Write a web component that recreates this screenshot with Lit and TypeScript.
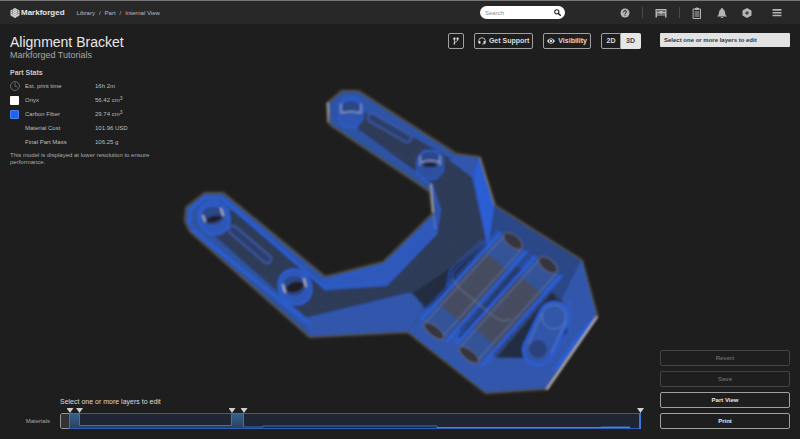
import { LitElement, html, svg, css } from "lit";
import { customElement, property, state } from "lit/decorators.js";
import { classMap } from "lit/directives/class-map.js";

@customElement("part-model")
class PartModel extends LitElement {
  static styles = css`
    :host { display: block; width: 100%; height: 100%; }
    svg { display: block; width: 100%; height: 100%; }
    .halo { fill: #444; stroke: #55524e; stroke-width: 4; stroke-linejoin: round; }
    .body { fill: #2f52a0; }
    .inner { fill: #2c374f; }
    .hatch { fill: url(#hatch); }
    .facet { fill: #3156ab; }
    .facet.bright { fill: #2c5fd4; }
    .facet.dim { fill: #2b4788; }
    .edge { fill: none; stroke: #2a60da; stroke-width: 3; stroke-linejoin: round; stroke-linecap: round; }
    .edge.thin { stroke-width: 1; }
    .shadow { fill: #202737; }
    .brown { fill: #484b59; }
    .end { fill: #2f54a6; }
    .mouth { fill: #34363f; stroke: #666a76; stroke-width: 1; }
    .ridge { fill: none; stroke: #5c7cbd; stroke-width: 1; }
    .groove { fill: none; stroke: #687590; stroke-width: 1; stroke-linecap: round; stroke-linejoin: round; }
    .wide { stroke: #4c629a; stroke-width: 10; stroke-linecap: round; }
    .blueline { stroke: #284b9d; stroke-width: 8; stroke-linecap: round; }
    .core { stroke: #2d3d65; stroke-width: 5; stroke-linecap: round; }
    .ring { fill: #2d56b5; stroke: #2a60d8; stroke-width: 2; stroke-linejoin: round; }
    .bore { fill: #29468a; stroke: #3466d2; stroke-width: 1; }
    .glint { fill: none; stroke: #aeb1b8; stroke-width: 2; stroke-linecap: round; }
    .glint.faint { stroke-width: 1; }
    .hole { fill: #201f20; }
    .shine { fill: none; stroke: #b9b7b0; stroke-width: 2; stroke-linecap: round; }
  `;

  render() {
    const outline = "M186 221L187 208L205 194L223 194L325 278L384 263L434 214L431 191L331 124L328 104L342 92L358 92L456 155L479 158L494 206L581 261L596 315L546 388L486 392L408 331L310 336L191 231Z";
    const inner = "M197 220L232 210L318 282L328 290L387 286L437 234L441 210L433 184L357 129L363 112L415 138L454 161L472 177L487 245L562 299L569 330L537 358L497 358L411 293L350 308L307 318Z";
    const slot = (a: number, b: number) => svg`
      <g transform="translate(${a} ${b})">
        <path class="brown" d="M502 234L523 251L446 340L423 320Z"/>
        <path class="end" d="M501 233L524 250L507 270L485 252Z M438 303L460 322L445 340L422 320Z" opacity=".85"/>
        <path class="hatch" d="M502 234L523 251L446 340L423 320Z"/>
        <path class="edge" d="M500 233L422 319M525 252L447 341"/>
        <path class="edge thin" d="M497 231L419 317M529 251L452 341"/>
        <path class="ridge" d="M504 236L426 322M521 250L443 336"/>
        <ellipse class="mouth" cx="513" cy="241" rx="11" ry="6" transform="rotate(38 513 241)"/>
        <ellipse class="mouth" cx="434" cy="331" rx="12" ry="5" transform="rotate(38 434 331)"/>
      </g>`;
    return html`
      <svg viewBox="0 24 800 415" role="img" aria-label="Alignment Bracket internal view">
        <defs>
          <filter id="halo"><feGaussianBlur stdDeviation="1.6"/></filter>
          <filter id="soft"><feGaussianBlur stdDeviation=".85"/></filter>
          <pattern id="hatch" width="3" height="3" patternUnits="userSpaceOnUse" patternTransform="rotate(-32)">
            <path d="M0 1H3" stroke="#3c5488" stroke-width="1" opacity=".45"/>
          </pattern>
        </defs>
        <path class="halo" filter="url(#halo)" d=${outline}/>
        <g filter="url(#soft)">
          <path class="body" d=${outline}/>
          <path class="inner" d=${inner}/>
          <path class="hatch" d=${inner}/>
          <path class="shadow" opacity=".7" d="M486 244L413 293L425 309L450 288Z M528 256L537 266L466 342L456 338Z M553 292L569 330L537 358L498 357Z"/>

          <path class="facet bright" d="M325 278L384 263L434 214L438 233L387 286L328 290L318 282Z" opacity=".5"/>
          <path class="facet" d="M307 318L410 293L423 306L408 331L310 336Z"/>
          <path class="facet dim" d="M494 206L581 261L562 298L488 245Z"/>
          <path class="facet" d="M581 261L596 315L568 336L562 298Z"/>
          <path class="facet" d="M408 331L423 317L497 359L538 358L568 334L596 315L546 388L486 392Z"/>
          <path class="facet bright" d="M473 176L479 158L494 206L488 247Z"/>
          <path class="facet" d="M449 160L456 155L479 158L472 177Z"/>

          <path class="edge" opacity=".85" d="M192 230L309 323M224 200L326 289M190 210L205 197L222 198M190 210L190 225"/>
          <path class="edge thin" d="M187 221L310 328M227 199L325 281L384 266L434 218M325 287L387 282L436 233L440 209L432 188"/>
          <path class="edge thin" opacity=".7" d="M332 122L357 129L432 185M335 106L344 97L358 96L455 158M331 106L332 122M363 106L415 138"/>
          <path class="edge thin" d="M476 163L489 244M493 207L487 247M307 318L410 293M408 329L486 390M582 262L595 314" opacity=".6"/>
          <path class="edge" d="M593 320L556 369"/>
          <path class="edge thin" d="M588 322L548 376M486 240L453 272L450 286M482 240L450 270L447 287M570 300L570 332L552 357"/>

          ${slot(0, 0)}
          ${slot(35, 24)}
          <path class="groove" d="M453 280L460 289L496 318L504 321L511 319"/>

          <path d="M554 317L538 350" stroke="#2a5fdb" stroke-width="32" stroke-linecap="round"/>
          <path d="M554 317L538 350" stroke="#3156aa" stroke-width="27" stroke-linecap="round"/>
          <circle class="ridge" cx="554" cy="317" r="12"/>
          <path class="ridge" d="M542 314L528 345M566 321L551 353"/>
          <circle class="shadow" cx="538" cy="349" r="9" opacity=".4"/>

          <path class="wide" d="M233 230L267 259"/><path class="blueline" d="M233 230L267 259"/><path class="core" d="M233 230L267 259"/>
          <path class="wide" d="M372 118L407 138"/><path class="blueline" d="M372 118L407 138"/><path class="core" d="M372 118L407 138"/>

          <ellipse class="ring" cx="214" cy="218" rx="15" ry="17" transform="rotate(-30 214 218)"/>
          <ellipse class="bore" cx="213" cy="216" rx="12" ry="10"/>
          <ellipse class="hole" cx="214" cy="219" rx="8" ry="3" transform="rotate(-14 214 219)"/>
          <path class="glint" d="M203 216L205 221M221 209L223 215"/>

          <ellipse class="ring" cx="295" cy="287" rx="16" ry="18" transform="rotate(-30 295 287)"/>
          <ellipse class="bore" cx="294" cy="286" rx="12" ry="11"/>
          <ellipse class="hole" cx="295" cy="287" rx="9" ry="5" transform="rotate(-18 295 287)"/>
          <path class="glint" d="M283 285L285 292M304 279L306 286"/>

          <path class="ring" d="M339 106L345 98L356 98L363 106V119L356 127H346L339 120Z" opacity=".75"/>
          <ellipse class="bore" cx="351" cy="107" rx="10" ry="7"/>
          <path class="glint faint" d="M341 104V113M361 104V113M342 113Q351 110 360 113"/>
          <path class="ring" d="M417 160L423 151H436L443 157V171L436 179H425L417 173Z" opacity=".75"/>
          <ellipse class="bore" cx="430" cy="158" rx="10" ry="7"/>
          <path class="glint faint" d="M420 156V165M440 156V165M421 162Q430 159 440 162"/>
          <ellipse class="hole" cx="430" cy="165" rx="7" ry="2"/>

          <path class="shine" d="M431 185L433 212" opacity=".7"/>
          <path class="shine" d="M434 216L435 228" opacity=".25"/>
          <path class="shine" d="M328 103V122" opacity=".6"/>
          <path class="shine" d="M597 317L547 389"/>
          <path class="shine" d="M480 158L494 204" opacity=".2"/>
        </g>
      </svg>`;
  }
}

type IconName = "help" | "printer" | "clipboard" | "bell" | "hex" | "menu" | "branch" | "headset" | "eye" | "search" | "clock" | "logo";

@customElement("ui-icon")
class UiIcon extends LitElement {
  @property() name: IconName = "help";
  static styles = css`
    :host { display: block; flex: none; width: 10px; height: 10px; }
    svg { display: block; width: 100%; height: 100%; fill: currentColor; }
    .line { fill: none; stroke: currentColor; stroke-width: 2; stroke-linecap: round; stroke-linejoin: round; }
    .cut { fill: none; stroke: #282828; stroke-width: 2; stroke-linecap: round; }
    .hollow { fill: #282828; }
    .fine { stroke-width: 1; }
  `;
  private shapes = {
    help: svg`<circle cx="10" cy="10" r="9"/><path class="cut" d="M7 8Q7 5 10 5T13 8Q13 9 10 11V12"/><circle class="hollow" cx="10" cy="15" r="1"/>`,
    printer: svg`<path d="M1 2H23V19H20V15H4V19H1Z"/><path class="hollow" d="M3 5H21V7H3ZM4 11H20V13H4Z"/><path d="M9 6H15V10L12 13L9 10Z"/>`,
    clipboard: svg`<path class="line" d="M2 4H16V23H2Z"/><path d="M5 2H7Q9 -1 11 2H13V6H5Z"/><path class="line" d="M5 10H13M5 14H13M5 18H13"/>`,
    bell: svg`<path d="M10 0Q12 0 12 2Q16 4 16 9Q16 14 20 17H0Q4 14 4 9Q4 4 8 2Q8 0 10 0ZM7 18H13Q12 20 10 20T7 18Z"/>`,
    hex: svg`<path d="M10 0L19 5V15L10 20L1 15V5Z"/><path class="cut" d="M10 7V13M7 10H13"/>`,
    menu: svg`<path d="M1 2H17V5H1ZM1 7H17V10H1ZM1 12H17V15H1Z"/>`,
    branch: svg`<path class="line" d="M6 17V5M6 14L14 9V5"/><circle cx="6" cy="4" r="3"/><circle cx="14" cy="4" r="3"/><circle cx="6" cy="17" r="2"/>`,
    headset: svg`<path class="line" d="M2 13V9Q2 2 10 2T18 9V13Q18 18 12 18"/><path d="M2 10H6V17H4Q1 17 1 14ZM18 10H14V17H16Q19 17 19 14Z"/>`,
    eye: svg`<path d="M0 10Q4 3 10 3T20 10Q16 17 10 17T0 10Z"/><circle cx="10" cy="10" r="5" fill="#1e1e1e"/><circle cx="10" cy="10" r="3"/>`,
    search: svg`<circle cx="8" cy="8" r="6" fill="none" stroke="currentColor" stroke-width="3"/><path d="M12 12L18 18" stroke="currentColor" stroke-width="4" stroke-linecap="round"/>`,
    clock: svg`<circle class="line" cx="10" cy="10" r="9"/><path class="line" d="M10 4V10L14 12"/>`,
    logo: svg`<path d="M10 0L19 5V15L10 20L1 15V5Z"/><path class="cut fine" opacity=".7" d="M1 8L10 3L19 8M1 12L10 7L19 12M2 15L10 11L18 15M6 17L10 15L14 17M5 3V12M15 3V12"/>`,
  };
  render() {
    const box: Partial<Record<IconName, string>> = { printer: "0 0 24 20", clipboard: "0 0 18 24", menu: "0 0 18 18" };
    return html`<svg viewBox=${box[this.name] ?? "0 0 20 20"} aria-hidden="true">${this.shapes[this.name]}</svg>`;
  }
}

@customElement("layer-track")
class LayerTrack extends LitElement {
  static styles = css`
    :host { display: block; position: relative; height: 16px; }
    svg { display: block; width: 100%; height: 16px; }
    .markers { position: absolute; left: 0; right: 0; top: -5px; height: 5px; }
    .marker {
      position: absolute; width: 7px; height: 5px; margin-left: -3px;
      background: #cfcfcf; clip-path: polygon(0 0, 100% 0, 50% 100%);
    }
  `;
  render() {
    return html`
      <svg viewBox="0 0 581 16" preserveAspectRatio="none" role="img" aria-label="Materials by layer">
        <defs><linearGradient id="fill" x2="0" y2="1"><stop stop-color="#32628c"/><stop offset="1" stop-color="#2c405f"/></linearGradient></defs>
        <rect x="9" y="0" width="572" height="16" fill="#1f2533"/>
        <rect x="10" y="1" width="10" height="14" fill="url(#fill)"/>
        <rect x="172" y="1" width="12" height="14" fill="url(#fill)"/>
        <rect x="20" y="12" width="152" height="3" fill="#264262"/>
        <rect x="9.500" y=".5" width="571" height="15" fill="none" stroke="#2d5db8"/>
        <path d="M9.5 15V.5H19.500V12.500H171.500V.5H183.500V14H203V13H377V14.500H541V14H570" fill="none" stroke="#3474b8"/>
        <path d="M377 14.500H570" stroke="#3f8bd0"/>
        <path d="M580 0V16" stroke="#3b74dc" stroke-width="2"/>
        <path d="M9 .5H1.500L.5 1.500V14.500L1.500 15.500H9" fill="#333" stroke="#929292"/>
      </svg>
      <div class="markers">
        ${[9.5, 19, 171.5, 183.5, 580].map((x) => html`<span class="marker" style="left:${(x / 581) * 100}%"></span>`)}
      </div>`;
  }
}

@customElement("app-root")
class AppRoot extends LitElement {
  @state() private mode = "3D";

  static styles = css`
    :host {
      display: flex; flex-direction: column; min-height: 100vh; box-sizing: border-box;
      background: #1e1e1e; color: #bdbdbd; border-top: 1px solid #777;
      font: 6px/8px "Liberation Sans", Arial, sans-serif;
    }
    * { box-sizing: border-box; }
    button, input { font: inherit; color: inherit; margin: 0; }
    h1, h2, p { margin: 0; font-weight: normal; }
    header { display: grid; grid-template-columns: 1fr auto 1fr; align-items: center; height: 23px; padding: 0 18px 0 10px; background: #282828; }
    .start, .crumbs { display: flex; align-items: center; }
    .brand { display: flex; align-items: center; gap: 1px; color: #e6e6e6; font-size: 8px; font-weight: bold; text-decoration: none; }
    .crumbs { gap: 4px; margin-left: 12px; }
    .crumbs a { color: inherit; text-decoration: none; }
    .search { display: flex; align-items: center; width: 85px; height: 13px; padding: 0 4px 0 5px; border-radius: 7px; background: #fff; color: #222; margin-left: 253px; }
    .search input { flex: 1; min-width: 0; padding: 0; border: 0; outline: 0; background: none; }
    .search input::placeholder { color: #8d8d8d; opacity: 1; }
    .search ui-icon { width: 7px; height: 7px; }
    .tools { display: flex; align-items: center; justify-content: flex-end; gap: 12px; color: #b5b5b5; }
    .tools button { display: block; padding: 0; border: 0; background: none; }
    .rule { width: 1px; height: 11px; background: #4a4a4a; }
    .printer { width: 12px; }
    .clipboard { height: 12px; }
    .tools .apart { margin-left: 3px; }
    .tools .menu { margin-left: 8px; }
    main { position: relative; flex: 1; display: grid; grid-template-columns: minmax(0, 1fr) 130px; column-gap: 19px; padding: 9px 10px 10px; }
    .canvas { position: absolute; inset: 0; }
    .work, aside { position: relative; display: flex; flex-direction: column; justify-content: space-between; }
    .work { pointer-events: none; }
    .work button { pointer-events: auto; }
    .top { display: flex; justify-content: space-between; align-items: flex-start; }
    h1 { font-size: 14px; line-height: 18px; color: #e8e8e8; }
    .owner { font-size: 9px; line-height: 9px; color: #a6a6a6; }
    h2 { font-size: 7px; line-height: 8px; margin-top: 9px; color: #c8c8c8; font-weight: bold; }
    .stats { border-collapse: collapse; margin-top: 2px; }
    .stats td, .stats th { height: 14px; padding: 0; font-weight: normal; text-align: left; }
    .stats .key { width: 15px; }
    .stats th { width: 70px; }
    .stats sup { font-size: 5px; line-height: 0; vertical-align: 2px; }
    .stats ui-icon { color: #666; }
    .swatch { display: block; width: 9px; height: 9px; border-radius: 1px; background: #fff; }
    .swatch.fiber { background: #1f62f2; border: 1px solid #4b80f0; }
    .note { width: 146px; margin-top: 3px; line-height: 7px; color: #aaa; }
    .actions { display: flex; gap: 10px; font-size: 7px; font-weight: bold; color: #ddd; }
    .actions button { display: flex; align-items: center; justify-content: center; gap: 3px; height: 16px; padding: 0 3px; border: 1px solid #a0a0a0; border-radius: 2px; background: #1e1e1e; white-space: nowrap; }
    .actions ui-icon { width: 8px; height: 8px; }
    .segment { display: flex; }
    .actions .segment button { width: 20px; padding: 0; border-radius: 2px 0 0 2px; }
    .actions .segment button + button { border-radius: 0 2px 2px 0; border-left: 0; }
    .actions .segment .on { background: #e6e6e6; color: #444; border-color: #e6e6e6; }
    .hint { height: 14px; padding: 0 4px; border-radius: 1px; background: #e2e2e2; color: #333; font-weight: bold; line-height: 14px; }
    .side-buttons { display: grid; gap: 5px; }
    .side-buttons button { height: 16px; padding: 0; border: 1px solid #a0a0a0; border-radius: 2px; background: none; color: #e6e6e6; font-weight: bold; }
    .side-buttons button:disabled { border-color: #444; color: #666; }
    .timeline { display: grid; grid-template-columns: 40px 1fr; column-gap: 10px; align-items: center; }
    .timeline p { grid-column: 2; margin-bottom: 7px; font-size: 7px; color: #dcdcdc; }
    .label { text-align: right; color: #a6a6a6; }
  `;

  private row(key: unknown, name: string, value: unknown) {
    return html`<tr><td class="key">${key}</td><th scope="row">${name}</th><td>${value}</td></tr>`;
  }

  render() {
    return html`
      <header>
        <div class="start">
          <a class="brand" href="#"><ui-icon name="logo"></ui-icon>Markforged</a>
          <nav class="crumbs"><a href="#library">Library</a><span>/</span><a href="#part">Part</a><span>/</span><a href="#view">Internal View</a></nav>
        </div>
        <label class="search"><input type="search" placeholder="Search" aria-label="Search" /><ui-icon name="search"></ui-icon></label>
        <div class="tools">
          <button aria-label="Help"><ui-icon name="help"></ui-icon></button>
          <span class="rule"></span>
          <button aria-label="Printers"><ui-icon class="printer" name="printer"></ui-icon></button>
          <span class="rule"></span>
          <button aria-label="Jobs"><ui-icon class="clipboard" name="clipboard"></ui-icon></button>
          <button class="apart" aria-label="Notifications"><ui-icon name="bell"></ui-icon></button>
          <button class="apart" aria-label="Add"><ui-icon name="hex"></ui-icon></button>
          <button class="menu" aria-label="Menu"><ui-icon name="menu"></ui-icon></button>
        </div>
      </header>
      <main>
        <div class="canvas"><part-model></part-model></div>
        <section class="work">
          <div class="top">
            <div>
              <h1>Alignment Bracket</h1>
              <p class="owner">Markforged Tutorials</p>
              <h2>Part Stats</h2>
              <table class="stats">
                ${this.row(html`<ui-icon name="clock"></ui-icon>`, "Est. print time", "16h 2m")}
                ${this.row(html`<span class="swatch"></span>`, "Onyx", html`56.42 cm<sup>3</sup>`)}
                ${this.row(html`<span class="swatch fiber"></span>`, "Carbon Fiber", html`29.74 cm<sup>3</sup>`)}
                ${this.row("", "Material Cost", "101.96 USD")}
                ${this.row("", "Final Part Mass", "106.25 g")}
              </table>
              <p class="note">This model is displayed at lower resolution to ensure performance.</p>
            </div>
            <div class="actions">
              <button aria-label="Versions"><ui-icon name="branch"></ui-icon></button>
              <button><ui-icon name="headset"></ui-icon>Get Support</button>
              <button><ui-icon name="eye"></ui-icon>Visibility</button>
              <div class="segment">
                ${["2D", "3D"].map((m) => html`<button class=${classMap({ on: this.mode === m })} @click=${() => (this.mode = m)}>${m}</button>`)}
              </div>
            </div>
          </div>
          <div class="timeline">
            <p>Select one or more layers to edit</p>
            <span class="label">Materials</span>
            <layer-track></layer-track>
          </div>
        </section>
        <aside>
          <div class="hint">Select one or more layers to edit</div>
          <div class="side-buttons">
            <button disabled>Revert</button>
            <button disabled>Save</button>
            <button>Part View</button>
            <button>Print</button>
          </div>
        </aside>
      </main>`;
  }
}
